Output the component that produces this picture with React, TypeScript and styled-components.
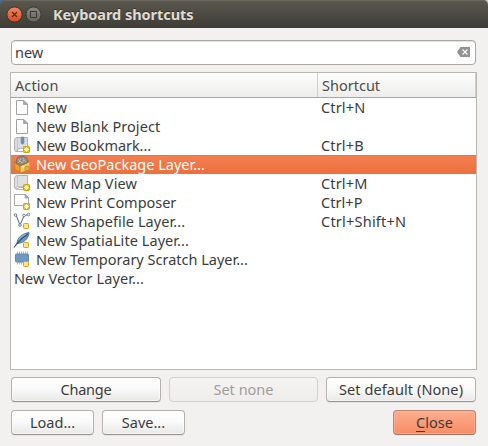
import React from "react";
import styled, { createGlobalStyle, css } from "styled-components";

const Global = createGlobalStyle`
  * { box-sizing: border-box; }
  html, body { margin: 0; padding: 0; background: #f2f1f0; }
  body { width: 488px; height: 446px; overflow: hidden; }
`;

const Dialog = styled.main`
  width: 488px;
  height: 446px;
  display: flex;
  flex-direction: column;
  background: #f2f1f0;
  color: #3c3c3c;
  font: 14.5px/19px "Noto Sans", "Open Sans", sans-serif;
`;

const Corner = styled.div`
  height: 28px;
  background: linear-gradient(90deg, #3f6f9f 50%, #c9c5c1 50%);
`;

const TitleBar = styled.header`
  height: 28px;
  display: flex;
  align-items: center;
  gap: 2px;
  padding: 1px 0 0 6px;
  border-radius: 5px 5px 0 0;
  background: linear-gradient(#5b584f, #3d3c37);
  box-shadow: inset 0 1px #69665d;
`;

const Title = styled.h1`
  margin: -1px 0 0 9px;
  font-size: 14.5px;
  line-height: 20px;
  font-weight: 700;
  color: #dfdbd2;
  text-shadow: 0 -1px #33322e;
`;

const Content = styled.section`
  flex: 1;
  display: flex;
  flex-direction: column;
  padding: 12px 11px 10px 10px;
`;

const Search = styled.div`
  height: 25px;
  margin: 0 1px;
  display: flex;
  align-items: center;
  justify-content: space-between;
  padding: 0 5px 0 3px;
  border: 1px solid #aba8a4;
  border-radius: 4px;
  background: #fff;
  box-shadow: inset 0 1px #e4e2e0;
`;

const Table = styled.div`
  height: 298px;
  margin-top: 7px;
  border: 1px solid #bab7b2;
  background: #fff;
`;

const columns = css`
  display: grid;
  grid-template-columns: 307px 1fr;
`;

const HeaderRow = styled.div`
  ${columns}
  height: 25px;
  border-bottom: 1px solid #aaa7a3;
  background: linear-gradient(#fdfdfd, #eeedec);
  color: #4c4c4c;
`;

const HeaderCell = styled.div`
  padding: 3px 0 0 4px;
  border-right: 1px solid #d2d0cd;
`;

const Row = styled.div<{ $selected?: boolean }>`
  ${columns}
  height: 19px;
  color: ${(p) => (p.$selected ? "#fff" : "#3c3c3c")};
  background: ${(p) => (p.$selected ? "linear-gradient(#e9693a, #f37f4f 1px, #ed6f3e)" : "none")};
`;

const Cell = styled.div`
  display: flex;
  align-items: center;
  padding-left: 3px;
  white-space: nowrap;
`;

const IconSlot = styled.span`
  width: 22px;
  height: 19px;
  flex: none;
  svg {
    display: block;
    margin-left: -1px;
  }
`;

const Text = styled.span<{ $track?: number }>`
  letter-spacing: ${(p) => p.$track ?? 0}px;
  white-space: nowrap;
`;

const ButtonGrid = styled.div`
  display: grid;
  grid-template-columns: 150px 149px 150px;
  justify-content: space-between;
  margin: 7px 1px 0;
`;

const Footer = styled.footer`
  display: flex;
  gap: 8px;
  margin: 8px 1px 0;
`;

const Button = styled.button<{ $primary?: boolean }>`
  width: 100%;
  height: 25px;
  padding: 0 0 1px;
  font: inherit;
  color: #3c3c3c;
  border: 1px solid #b3b0ad;
  border-bottom-color: #96938f;
  border-radius: 4px;
  background: linear-gradient(#fff, #fafafa 45%, #e9e8e7);
  box-shadow: inset 0 0 0 1px #ffffff90, 0 1px #e7e5e3;

  &:disabled {
    color: #9f9d9a;
    border-color: #d3d1ce;
    background: linear-gradient(#f5f4f3, #eeedeb);
    box-shadow: none;
  }
  ${(p) =>
    p.$primary &&
    css`
      border-color: #b98672;
      border-bottom-color: #a1715d;
      background: linear-gradient(#ffae8f, #f58c64);
      box-shadow: inset 0 0 0 1px #ffb99d90;
    `}
`;

const FooterButton = styled(Button)`
  width: 83px;
  margin-left: ${(p) => (p.$primary ? "auto" : "0")};
`;

const Mnemonic = styled.span`
  display: inline-block;
  height: 18px;
  line-height: 17px;
  border-bottom: 1px solid #3c3c3c;
`;

const WindowButton = ({ close }: { close?: boolean }) => (
  <svg width="17" height="17" viewBox="0 0 17 17">
    <defs>
      <linearGradient id={close ? "closeFill" : "maxFill"} x2="0" y2="1">
        <stop stopColor={close ? "#f58562" : "#8c8981"} />
        <stop offset="1" stopColor={close ? "#df4c19" : "#65635b"} />
      </linearGradient>
    </defs>
    <circle cx="8.5" cy="8.5" r="7.6" fill={`url(#${close ? "closeFill" : "maxFill"})`} stroke="#383732" />
    {close ? (
      <path d="M6 6l5 5M11 6l-5 5" stroke="#572816" strokeWidth="1.3" />
    ) : (
      <path d="M5.5 5.5h6v6h-6z" fill="none" stroke="#393833" />
    )}
  </svg>
);

const ClearIcon = () => (
  <svg width="13" height="12" viewBox="0 0 13 12">
    <path d="M0 5 3.5 0H13v10H3.5z" fill="#929292" />
    <path d="m5.5 2.5 5 5m0-5-5 5" stroke="#fff" strokeWidth="1.2" />
  </svg>
);

const Badge = ({ plain }: { plain?: boolean }) => (
  <>
    <rect
      x="10.5"
      y={plain ? 11.5 : 10.5}
      width={plain ? 5 : 6}
      height={plain ? 5 : 6}
      rx=".8"
      fill={plain ? "#f8e694" : "#dcbd2c"}
      stroke="#c9a51c"
    />
    {!plain && (
      <path d="M13.5 11v5M11 13.5h5M11.8 11.8l3.4 3.4m0-3.4-3.4 3.4" stroke="#fff8cb" strokeWidth=".9" />
    )}
  </>
);

type IconName = "page" | "bookmark" | "package" | "map" | "composer" | "shape" | "feather" | "chip";

const art: Record<IconName, React.ReactNode> = {
  page: (
    <>
      <path d="M3.5 2.5h7.5l3.5 3.5v10.5h-11z" fill="#fdfdfd" stroke="#a2a2a2" />
      <path d="M10.5 2.5v4h4z" fill="#aaa" stroke="#999" strokeWidth=".7" />
    </>
  ),
  bookmark: (
    <>
      <path d="M4 1.5h10.5v11H5.5L4 15.5H2.5l-1-2V4Q2 1.5 4 1.5z" fill="#dcdcdc" stroke="#b0b0b0" />
      <path d="M4.5 2v10.5l-1 3M5 12.5h9" fill="none" stroke="#bcbcbc" strokeWidth=".8" />
      <path d="M3.5 15.5H10" fill="none" stroke="#b4b4b4" />
      <path d="M8 1h3v6L9.5 8.5 8 7z" fill="#668fb7" stroke="#6d91b5" strokeWidth=".6" />
      <Badge />
    </>
  ),
  package: (
    <>
      <path d="m1.5 7 3-1 12 1v7.5L7 17.5l-5-3z" fill="#e9a22e" stroke="#bd751c" strokeWidth=".6" />
      <path d="m7 11 9.5-4v7.5L7 17.5z" fill="#f6c75a" />
      <path d="m1.5 7.5 5.5 3.5v6" fill="none" stroke="#ac671e" strokeWidth=".8" />
      <path d="M3 7.5Q3 1 9 1t6 6.5L8 10.5z" fill="#938780" stroke="#675850" strokeWidth=".6" />
      <path d="m5 4.5 2 1 1-2M5 8l2-2 2 2 2-3 2 2M10 3l1 2" fill="none" stroke="#cfc5bf" strokeWidth=".8" />
      <path d="m9 12 2-1v2" fill="none" stroke="#fff0ac" />
      <rect x="12" y="11.5" width="4" height="4" rx=".7" fill="#e5af41" stroke="#c28425" strokeWidth=".8" />
    </>
  ),
  map: (
    <>
      <path d="M4.5 1.5h10v12H6l-2 2q-2.5-.5-2.5-2.5V4Q2 1.5 4.5 1.5" fill="#e0e0e0" stroke="#b2b2b2" />
      <path d="M4.5 2v10.5q-2 0-2 2M5 12.5h9" fill="none" stroke="#bdbdbd" strokeWidth=".8" />
      <path d="M4 15.5h6" stroke="#b8b8b8" />
      <Badge />
    </>
  ),
  composer: (
    <>
      <path d="M1.5 1.5h11l3 3v8h-14z" fill="#fff" stroke="#aaa" />
      <path d="M12 1.5V5h3.5z" fill="#aaa" stroke="#999" strokeWidth=".7" />
      <Badge />
    </>
  ),
  shape: (
    <>
      <path d="m3 3 4 10 4-9 4-1.5" fill="none" stroke="#6b7c8b" strokeWidth="1.1" />
      <g fill="#f7fafc" stroke="#687b8c" strokeWidth=".9">
        <circle cx="2.5" cy="3" r="1.3" />
        <circle cx="7" cy="13" r="1.3" />
        <circle cx="11" cy="3.5" r="1.3" />
        <circle cx="15.5" cy="2.5" r="1.3" />
      </g>
      <Badge plain />
    </>
  ),
  feather: (
    <>
      <path d="M4 12.5C4 7 9 2.5 16 1.5 16 7 11 12.5 4 12.5z" fill="#7199bf" stroke="#456987" strokeWidth=".8" />
      <path d="M1 16.5Q6 9 15 3" fill="none" stroke="#314e67" strokeWidth="1.1" />
      <path d="M5.5 8.5Q8.5 4.5 13 3" fill="none" stroke="#a4c3dd" strokeWidth=".8" />
      <Badge plain />
    </>
  ),
  chip: (
    <>
      <path d="M4.5 1.5v13M6.5 1.5v13M8.5 1.5v13M10.5 1.5v13M12.5 1.5v13M14.5 1.5v13" stroke="#9bb0c3" strokeWidth=".9" />
      <rect x="2.5" y="4" width="13" height="8" rx="1" fill="#6f98c4" stroke="#6389b1" />
      <Badge plain />
    </>
  ),
};

const ActionIcon = ({ name }: { name: IconName }) => (
  <IconSlot>
    <svg width="18" height="18" viewBox="0 0 18 18">{art[name]}</svg>
  </IconSlot>
);

interface Action {
  label: string;
  icon?: IconName;
  keys?: string;
  track?: number;
  keyTrack?: number;
  selected?: boolean;
}

const actions: Action[] = [
  { label: "New", icon: "page", keys: "Ctrl+N", track: 0.3, keyTrack: 0.15 },
  { label: "New Blank Project", icon: "page", track: 0.06 },
  { label: "New Bookmark...", icon: "bookmark", keys: "Ctrl+B", track: -0.05, keyTrack: 0.15 },
  { label: "New GeoPackage Layer...", icon: "package", selected: true },
  { label: "New Map View", icon: "map", keys: "Ctrl+M", track: 0.1, keyTrack: 0.15 },
  { label: "New Print Composer", icon: "composer", keys: "Ctrl+P", track: -0.03, keyTrack: 0.05 },
  { label: "New Shapefile Layer...", icon: "shape", keys: "Ctrl+Shift+N", track: 0.09, keyTrack: 0.22 },
  { label: "New SpatiaLite Layer...", icon: "feather", track: 0.07 },
  { label: "New Temporary Scratch Layer...", icon: "chip", track: 0 },
  { label: "New Vector Layer...", track: 0.1 },
];

export default function App() {
  return (
    <Dialog>
      <Global />
      <Corner>
        <TitleBar>
          <WindowButton close />
          <WindowButton />
          <Title><Text $track={-0.04}>Keyboard shortcuts</Text></Title>
        </TitleBar>
      </Corner>
      <Content>
        <Search>
          <Text>new</Text>
          <ClearIcon />
        </Search>
        <Table>
          <HeaderRow>
            <HeaderCell><Text $track={0.1}>Action</Text></HeaderCell>
            <HeaderCell><Text>Shortcut</Text></HeaderCell>
          </HeaderRow>
          {actions.map((a) => (
            <Row key={a.label} $selected={a.selected}>
              <Cell>
                {a.icon && <ActionIcon name={a.icon} />}
                <Text $track={a.track}>{a.label}</Text>
              </Cell>
              <Cell><Text $track={a.keyTrack}>{a.keys}</Text></Cell>
            </Row>
          ))}
        </Table>
        <ButtonGrid>
          <Button><Text $track={-0.2}>Change</Text></Button>
          <Button disabled><Text>Set none</Text></Button>
          <Button><Text $track={0.08}>Set default (None)</Text></Button>
        </ButtonGrid>
        <Footer>
          <FooterButton><Text>Load...</Text></FooterButton>
          <FooterButton><Text>Save...</Text></FooterButton>
          <FooterButton $primary><Text><Mnemonic>C</Mnemonic>lose</Text></FooterButton>
        </Footer>
      </Content>
    </Dialog>
  );
}
